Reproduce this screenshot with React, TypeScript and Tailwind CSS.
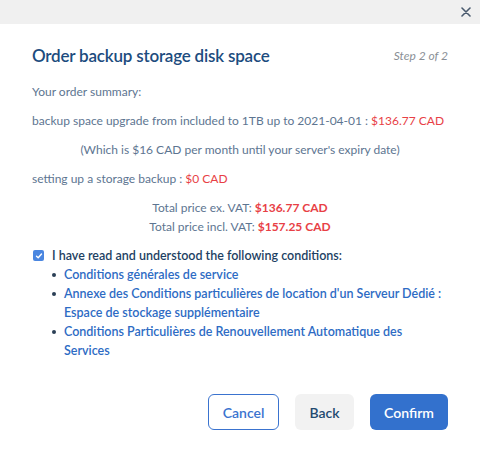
import React from "react";

export default function App() {
  const font = { fontFamily: "Lato, 'Noto Sans', sans-serif" };
  return (
    <div className="w-[480px] h-[453px] bg-white relative overflow-hidden" style={font}>
      <div className="h-[24px] bg-[#f0f0f0] flex items-center justify-end pr-[9px]">
        <svg width="10" height="10" viewBox="0 0 10 10" className="text-[#4a5a6e]">
          <path d="M1 1 L9 9 M9 1 L1 9" stroke="currentColor" strokeWidth="1.6" strokeLinecap="round" />
        </svg>
      </div>
      <div className="px-8">
        <div className="flex items-center justify-between mt-[20px] h-[24px]">
          <h1 className="text-[17px] tracking-[-0.2px] font-semibold text-[#1c4c7e] leading-[24px]">Order backup storage disk space</h1>
          <span className="text-[12px] italic text-[#8a8f96]">Step 2 of 2</span>
        </div>
        <div className="mt-[14px] text-[12px] leading-[19px] text-[#5d7591]">
          <p>Your order summary:</p>
          <p className="mt-[10px] whitespace-nowrap">
            backup space upgrade from included to 1TB up to 2021-04-01 : <span className="text-[#e83f46]">$136.77 CAD</span>
          </p>
          <p className="mt-[10px] text-center">(Which is $16 CAD per month until your server's expiry date)</p>
          <p className="mt-[10px]">
            setting up a storage backup : <span className="text-[#e83f46]">$0 CAD</span>
          </p>
          <div className="mt-[10px] text-center">
            <p>
              Total price ex. VAT: <span className="font-bold text-[#e83f46]">$136.77 CAD</span>
            </p>
            <p>
              Total price incl. VAT: <span className="font-bold text-[#e83f46]">$157.25 CAD</span>
            </p>
          </div>
        </div>
        <div className="mt-[10px] text-[12.5px] leading-[19px] font-semibold">
          <div className="flex items-center">
            <span className="w-[11px] h-[11px] rounded-[2px] bg-[#4a86e0] flex items-center justify-center mr-[8px] ml-[1px]">
              <svg width="8" height="8" viewBox="0 0 8 8">
                <path d="M1.5 4.2 L3.2 5.8 L6.5 2" stroke="white" strokeWidth="1.4" fill="none" strokeLinecap="round" strokeLinejoin="round" />
              </svg>
            </span>
            <span className="text-[#1d3f63]">I have read and understood the following conditions:</span>
          </div>
          <ul className="pl-[20px] text-[#2d6bc4]">
            {[
              "Conditions générales de service",
              "Annexe des Conditions particulières de location d'un Serveur Dédié : Espace de stockage supplémentaire",
              "Conditions Particulières de Renouvellement Automatique des Services",
            ].map((t) => (
              <li key={t} className="flex">
                <span className="w-[12px] shrink-0 flex justify-start pt-[8px]">
                  <span className="w-[4px] h-[4px] rounded-full bg-[#2b3f55] block" />
                </span>
                <span>{t}</span>
              </li>
            ))}
          </ul>
        </div>
        <div className="flex justify-end gap-4 mt-[34px]">
          <button className="h-[36px] w-[71px] rounded-[6px] border border-[#3a73cf] text-[#3a73cf] text-[14px] font-semibold bg-white">Cancel</button>
          <button className="h-[36px] w-[59px] rounded-[6px] bg-[#f2f2f2] text-[#234a70] text-[14px] font-semibold">Back</button>
          <button className="h-[36px] w-[78px] rounded-[6px] bg-[#3371cd] text-white text-[14px] font-semibold">Confirm</button>
        </div>
      </div>
    </div>
  );
}
